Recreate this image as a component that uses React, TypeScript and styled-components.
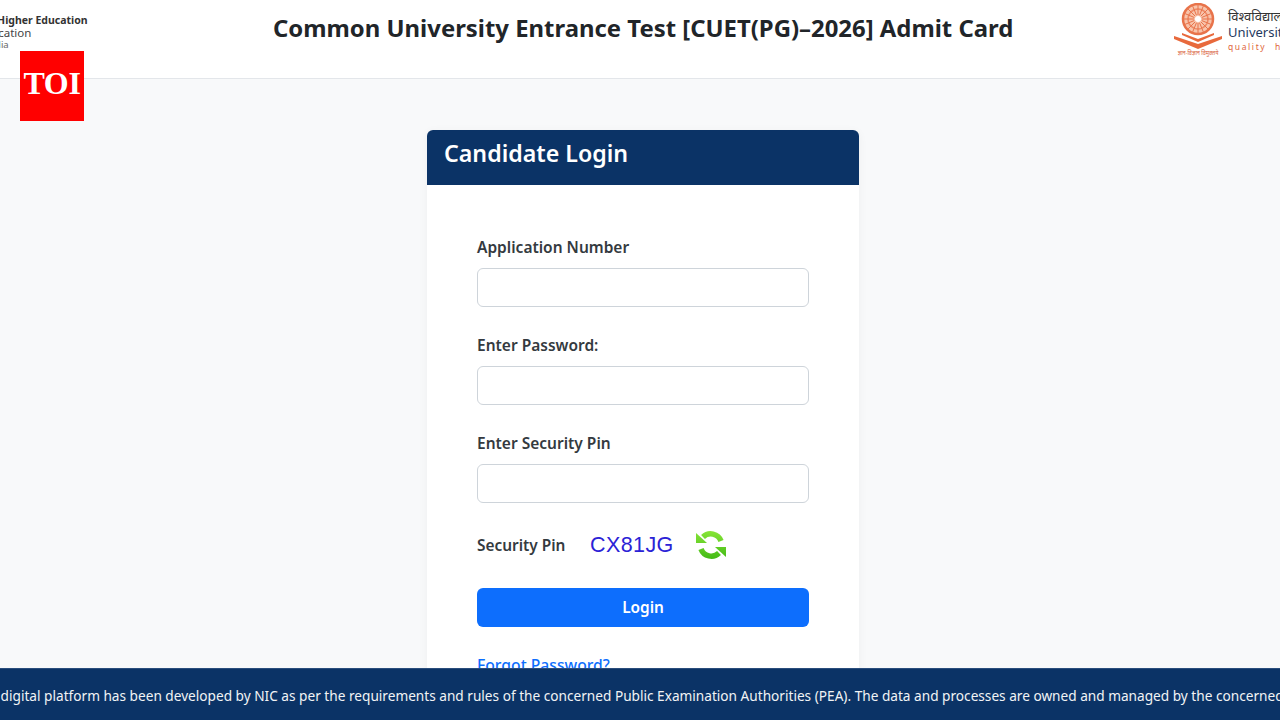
import React from "react";
import styled, { createGlobalStyle } from "styled-components";

const Global = createGlobalStyle`
  html, body { margin: 0; padding: 0; height: 100%; overflow: hidden; background: #f8f9fa; }
  * { box-sizing: border-box; }
  body { font-family: "Noto Sans", "Open Sans", sans-serif; color: #212529; }
`;
const Page = styled.div`
  height: 720px;
  overflow: hidden;
  position: relative;
`;
const Header = styled.header`
  height: 79px;
  background: #fff;
  border-bottom: 1px solid #e3e6ea;
  display: grid;
  grid-template-columns: 273px 740px 267px;
  align-items: flex-start;
  overflow: hidden;
`;
const LeftLogo = styled.div`
  margin-left: -83px;
  padding-top: 13px;
  display: flex;
  flex-direction: column;
  white-space: nowrap;
`;
const LogoStrong = styled.span`
  font-size: 10.5px;
  line-height: 14px;
  font-weight: 700;
  color: #333;
`;
const LogoLine = styled.span`
  font-size: 11.5px;
  line-height: 12px;
  color: #444;
`;
const LogoSmall = styled.span`
  font-size: 9.5px;
  line-height: 12px;
  color: #666;
  margin-left: -1px;
`;
const Title = styled.h1`
  margin: 11px 0 0;
  font-size: 23.9px;
  line-height: 34px;
  font-weight: 700;
  color: #212529;
  white-space: nowrap;
`;
const RightLogo = styled.div`
  display: flex;
  align-items: flex-start;
  gap: 5px;
  padding: 3px 0 0;
  margin-left: 160px;
  white-space: nowrap;
  width: 300px;
`;
const RightText = styled.div`
  display: flex;
  flex-direction: column;
  padding-top: 6px;
`;
const Hindi = styled.span`
  font-size: 13px;
  line-height: 15px;
  color: #333;
`;
const Uni = styled.span`
  font-size: 13px;
  line-height: 16px;
  color: #1f3a5f;
`;
const Quality = styled.span`
  font-size: 8.5px;
  line-height: 14px;
  letter-spacing: 1.6px;
  word-spacing: 5px;
  color: #e0663c;
`;
const Badge = styled.div`
  position: absolute;
  left: 20px;
  top: 51px;
  width: 64px;
  height: 70px;
  padding-bottom: 6px;
  background: #ff0000;
  color: #fff;
  font-family: "Liberation Serif", serif;
  font-weight: 700;
  font-size: 32px;
  display: flex;
  align-items: center;
  justify-content: center;
  letter-spacing: -0.3px;
`;
const Main = styled.main`
  display: flex;
  justify-content: center;
  padding: 51px 0 0 6px;
`;
const Card = styled.section`
  width: 432px;
  background: #fff;
  border-radius: 6px;
  box-shadow: 0 2px 10px rgba(0, 0, 0, 0.05);
  overflow: hidden;
`;
const CardHead = styled.div`
  height: 55px;
  background: #0b3366;
  color: #fff;
  font-size: 23.2px;
  font-weight: 600;
  line-height: 46px;
  padding-left: 17px;
`;
const CardBody = styled.div`
  padding: 50px 50px 30px;
  display: flex;
  flex-direction: column;
`;
const Field = styled.div`
  display: flex;
  flex-direction: column;
  height: 98px;
`;
const Label = styled.label`
  font-size: 15.5px;
  line-height: 24px;
  font-weight: 600;
  color: #343a40;
  height: 33px;
`;
const Input = styled.input`
  height: 39px;
  width: 100%;
  border: 1px solid #ced4da;
  border-radius: 6px;
  background: #fff;
`;
const PinRow = styled.div`
  display: flex;
  align-items: center;
  height: 40px;
  margin-top: -4px;
`;
const PinLabel = styled.span`
  font-size: 15.4px;
  font-weight: 600;
  color: #343a40;
  width: 113px;
`;
const Captcha = styled.span`
  font-family: "Liberation Sans", sans-serif;
  font-size: 21.5px;
  letter-spacing: 0.4px;
  color: #2b22d6;
  width: 105px;
`;
const Login = styled.button`
  margin-top: 23px;
  height: 39px;
  border: 0;
  border-radius: 6px;
  background: #0d6efd;
  color: #fff;
  font: 600 15.4px "Noto Sans", sans-serif;
`;
const Forgot = styled.a`
  margin-top: 26px;
  font-size: 15.7px;
  line-height: 24px;
  font-weight: 500;
  color: #0d6efd;
`;
const Footer = styled.footer`
  position: absolute;
  left: 0;
  right: 0;
  bottom: 0;
  height: 52px;
  background: #0b3366;
  border-top: 1px solid #2a4d7c;
  color: #f1f3f5;
  font-size: 13.65px;
  line-height: 54px;
  white-space: nowrap;
  overflow: hidden;
`;
const Ticker = styled.span`
  display: inline-block;
  margin-left: -29px;
`;

const Emblem = () => (
  <svg width="50" height="56" viewBox="0 0 50 56" aria-hidden="true">
    <circle cx="25" cy="16" r="15" fill="#f8c4ab" stroke="#e8734a" strokeWidth="2.5" />
    <circle cx="25" cy="16" r="10" fill="none" stroke="#ee8a66" strokeWidth="1.5" />
    {Array.from({ length: 16 }, (_, i) => {
      const a = (i * Math.PI) / 8;
      return (
        <line
          key={i}
          x1={25 + 4 * Math.cos(a)}
          y1={16 + 4 * Math.sin(a)}
          x2={25 + 14 * Math.cos(a)}
          y2={16 + 14 * Math.sin(a)}
          stroke="#e8734a"
          strokeWidth="1"
        />
      );
    })}
    <circle cx="25" cy="16" r="3" fill="#fff" />
    <path d="M1 33 L25 41 L49 33 L49 36 L25 46 L1 36 Z" fill="#e8693c" />
    <path d="M9 30 L25 36 L41 30 L41 32 L25 39 L9 32 Z" fill="#e8693c" />
    <text x="25" y="52" textAnchor="middle" fontSize="5.5" fill="#d9623a">
      ज्ञान-विज्ञान विमुक्तये
    </text>
  </svg>
);

const Refresh = () => (
  <svg width="32" height="32" viewBox="0 0 32 32" aria-hidden="true">
    <defs>
      <linearGradient id="g" gradientUnits="userSpaceOnUse" x1="0" y1="0" x2="0" y2="32">
        <stop offset="0" stopColor="#8ce83a" />
        <stop offset="1" stopColor="#3fb814" />
      </linearGradient>
    </defs>
    <path d="M26 12 A11 11 0 0 0 8 8" fill="none" stroke="url(#g)" strokeWidth="5.5" />
    <path d="M1 4 L12 14 L1 14 Z" fill="url(#g)" />
    <path d="M6 20 A11 11 0 0 0 24 24" fill="none" stroke="url(#g)" strokeWidth="5.5" />
    <path d="M31 28 L20 18 L31 18 Z" fill="url(#g)" />
  </svg>
);

export default function App() {
  return (
    <Page>
      <Global />
      <Header>
        <LeftLogo>
          <LogoStrong>Department of Higher Education</LogoStrong>
          <LogoLine>Ministry of Education</LogoLine>
          <LogoSmall>Government of India</LogoSmall>
        </LeftLogo>
        <Title>Common University Entrance Test [CUET(PG)–2026] Admit Card</Title>
        <RightLogo>
          <Emblem />
          <RightText>
            <Hindi>विश्वविद्यालय अनुदान आयोग</Hindi>
            <Uni>University Grants Commission</Uni>
            <Quality>quality higher education</Quality>
          </RightText>
        </RightLogo>
      </Header>
      <Badge>TOI</Badge>
      <Main>
        <Card>
          <CardHead>Candidate Login</CardHead>
          <CardBody>
            <Field>
              <Label>Application Number</Label>
              <Input />
            </Field>
            <Field>
              <Label>Enter Password:</Label>
              <Input />
            </Field>
            <Field>
              <Label>Enter Security Pin</Label>
              <Input />
            </Field>
            <PinRow>
              <PinLabel>Security Pin</PinLabel>
              <Captcha>CX81JG</Captcha>
              <Refresh />
            </PinRow>
            <Login>Login</Login>
            <Forgot>Forgot Password?</Forgot>
          </CardBody>
        </Card>
      </Main>
      <Footer>
        <Ticker>
          This digital platform has been developed by NIC as per the requirements and rules of the concerned Public
          Examination Authorities (PEA). The data and processes are owned and managed by the concerned PEA.
        </Ticker>
      </Footer>
    </Page>
  );
}
